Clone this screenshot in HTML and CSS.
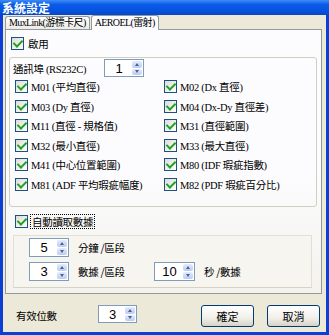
FILE: index.html
```html
<!DOCTYPE html>
<html lang="zh-Hant">
<head>
    <meta charset="UTF-8">
    <title>系統設定</title>
    <link rel="stylesheet" href="styles.css">
</head>
<body>

<div class="window">
    <div class="titlebar">系統設定</div>

    <div class="client">
        <div class="tabs">
            <span class="tab">MuxLink(游標卡尺)</span>
            <span class="tab active">AEROEL(雷射)</span>
        </div>

        <div class="panel">
            <label class="check enable"><span class="box"></span>啟用</label>

            <div class="group">
                <div class="port-row">
                    <span class="port-label">通訊埠 (RS232C)</span>
                    <div class="spin"><span class="val">1</span><span class="arrows"><span class="up"></span><span class="down"></span></span></div>
                </div>

                <div class="check-grid">
                    <label class="check"><span class="box"></span>M01 (平均直徑)</label>
                    <label class="check"><span class="box"></span>M02 (Dx 直徑)</label>
                    <label class="check"><span class="box"></span>M03 (Dy 直徑)</label>
                    <label class="check"><span class="box"></span>M04 (Dx-Dy 直徑差)</label>
                    <label class="check"><span class="box"></span>M11 (直徑 - 規格值)</label>
                    <label class="check"><span class="box"></span>M31 (直徑範圍)</label>
                    <label class="check"><span class="box"></span>M32 (最小直徑)</label>
                    <label class="check"><span class="box"></span>M33 (最大直徑)</label>
                    <label class="check"><span class="box"></span>M41 (中心位置範圍)</label>
                    <label class="check"><span class="box"></span>M80 (IDF 瑕疵指數)</label>
                    <label class="check"><span class="box"></span>M81 (ADF 平均瑕疵幅度)</label>
                    <label class="check"><span class="box"></span>M82 (PDF 瑕疵百分比)</label>
                </div>
            </div>

            <label class="check auto"><span class="box"></span><span class="focus">自動讀取數據</span></label>

            <div class="inner">
                <div class="inner-row">
                    <div class="spin"><span class="val">5</span><span class="arrows"><span class="up"></span><span class="down"></span></span></div>
                    <span class="unit">分鐘 /區段</span>
                </div>
                <div class="inner-row">
                    <div class="spin"><span class="val">3</span><span class="arrows"><span class="up"></span><span class="down"></span></span></div>
                    <span class="unit">數據 /區段</span>
                    <div class="spin wide"><span class="val">10</span><span class="arrows"><span class="up"></span><span class="down"></span></span></div>
                    <span class="unit">秒 /數據</span>
                </div>
            </div>
        </div>

        <div class="footer">
            <span class="digits-label">有效位數</span>
            <div class="spin narrow"><span class="val">3</span><span class="arrows"><span class="up"></span><span class="down"></span></span></div>
            <button class="btn ok">確定</button>
            <button class="btn">取消</button>
        </div>
    </div>
</div>

</body>
</html>
```

FILE: styles.css
```css
* {
    box-sizing: border-box;
}

body {
    margin: 0;
    font-family: "Liberation Serif", "Noto Sans CJK TC", serif;
    font-size: 10.5px;
    letter-spacing: -0.3px;
    color: #000;
    background: #fff;
}

.window {
    width: 329px;
    height: 335px;
    display: flex;
    flex-direction: column;
    padding: 0 3px 3px;
    background: #0b3fd6;
}

.titlebar {
    height: 15px;
    margin: 0 -3px;
    padding-left: 2px;
    background: linear-gradient(#3d8cf5, #0a5ce8 30%, #0553e0 70%, #0847c6);
    color: #fff;
    font-family: "Noto Sans CJK TC", sans-serif;
    font-weight: bold;
    font-size: 12px;
    letter-spacing: 0;
    line-height: 15px;
}

.client {
    flex: 1;
    display: flex;
    flex-direction: column;
    background: #ece9d8;
}

/* tabs */
.tabs {
    height: 14px;
    display: flex;
    align-items: flex-end;
    padding-left: 2px;
}

.tab {
    height: 13px;
    padding: 0 3px;
    border: 1px solid #919b9c;
    border-bottom: none;
    border-radius: 3px 3px 0 0;
    background: linear-gradient(#fff, #ecebe6);
    font-size: 10px;
    letter-spacing: -0.6px;
    line-height: 12px;
    white-space: nowrap;
}

.tab.active {
    height: 15px;
    margin-bottom: -1px;
    margin-left: 1px;
    background: #fcfcfe;
    position: relative;
    line-height: 14px;
}

.panel {
    height: 265px;
    margin: 0 4px 0 2px;
    padding-top: 7px;
    border: 1px solid #919b9c;
    background: linear-gradient(#fcfcfe 55%, #f3f2ec);
}

/* checkboxes */
.check {
    display: flex;
    align-items: center;
    gap: 3px;
    white-space: nowrap;
}

.box {
    width: 13px;
    height: 13px;
    flex: none;
    display: flex;
    align-items: center;
    justify-content: center;
    border: 1px solid #1c5180;
    background: linear-gradient(135deg, #dcdcd7, #fff);
}

.box::after {
    content: "";
    width: 4px;
    height: 7px;
    margin-top: -2px;
    border: solid #21a121;
    border-width: 0 2px 2px 0;
    transform: rotate(45deg);
}

.enable {
    height: 13px;
    margin-left: 5px;
    gap: 4px;
}

.group {
    margin: 7px 4px 0 3px;
    padding: 1px 0 12px;
    border: 1px solid #d0d0bf;
    border-radius: 3px;
}

.port-row {
    display: flex;
    align-items: center;
    height: 18px;
    padding-left: 3px;
}

.port-label {
    width: 91px;
}

.check-grid {
    display: grid;
    grid-template-columns: 149px 1fr;
    grid-auto-rows: 19.5px;
    padding-left: 5px;
}

.auto {
    height: 13px;
    margin: 8px 0 0 9px;
}

.focus {
    outline: 1px dotted #000;
    padding: 0 1px;
    line-height: 13px;
    font-family: "Noto Sans CJK TC", sans-serif;
}

.inner {
    width: 299px;
    height: 53px;
    margin: 7px 0 0 7px;
    padding: 2px 0 0 15px;
    display: flex;
    flex-direction: column;
    gap: 5px;
    border: 1px solid #e2e0d4;
    border-bottom-color: #d6d3c4;
    background: #f6f5f0;
}

.inner-row {
    display: flex;
    align-items: center;
    height: 19px;
}

.unit {
    width: 85px;
    padding-left: 9px;
    font-family: "Noto Sans CJK TC", sans-serif;
}

/* spinners */
.spin {
    width: 40px;
    height: 18px;
    display: flex;
    padding: 1px;
    border: 1px solid #7f9db9;
    background: #fff;
}

.inner-row .spin {
    height: 19px;
}

.spin.wide {
    width: 41px;
}

.spin.narrow {
    width: 39px;
}

.val {
    flex: 1;
    text-align: center;
    font-family: "Liberation Sans", sans-serif;
    font-size: 13px;
    letter-spacing: 0;
    line-height: 15px;
}

.arrows {
    width: 10px;
    display: flex;
    flex-direction: column;
    gap: 1px;
}

.arrows span {
    flex: 1;
    display: flex;
    align-items: center;
    justify-content: center;
    border-radius: 2px;
    background: linear-gradient(#e4ebfd, #b9cbf5);
}

.up::after,
.down::after {
    content: "";
    border-left: 2.5px solid transparent;
    border-right: 2.5px solid transparent;
}

.up::after {
    border-bottom: 3px solid #4d6185;
}

.down::after {
    border-top: 3px solid #4d6185;
}

/* footer */
.footer {
    flex: 1;
    display: flex;
    align-items: flex-start;
    padding: 11px 6px 0 13px;
}

.digits-label {
    width: 82px;
    line-height: 22px;
    font-family: "Noto Sans CJK TC", sans-serif;
}

.btn {
    width: 53px;
    height: 22px;
    margin-left: 13px;
    padding: 0;
    border: 1px solid #003c74;
    border-radius: 3px;
    background: linear-gradient(#fff, #f0efe9 60%, #d8d2c6);
    font-family: "Noto Sans CJK TC", sans-serif;
    font-size: 11px;
    color: #000;
}

.btn.ok {
    margin-left: auto;
}
```
